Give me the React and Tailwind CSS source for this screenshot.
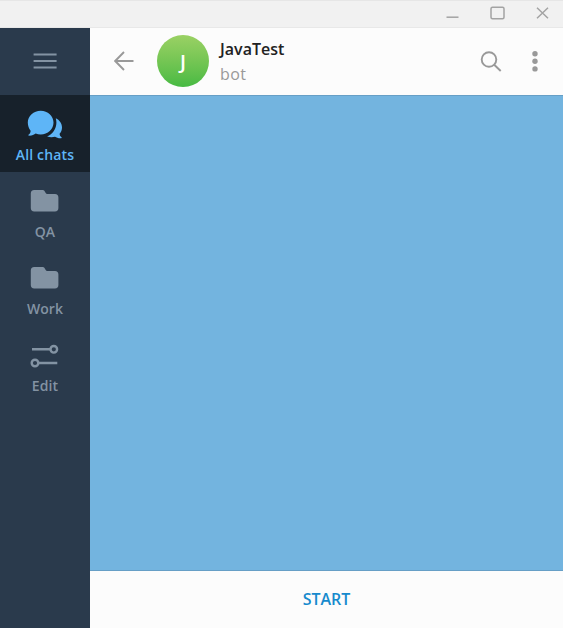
const ICON = 'block h-8 w-10 shrink-0';

function ChatsIcon() {
  return (
    <svg viewBox="0 0 40 32" className={ICON} fill="#5eb5f7">
      <path d="M15.7 2.8C22.8 2.8 28.5 8 28.5 14.6S22.8 26.5 15.7 26.5c-1.8 0-3.5-.3-5-.9-1.7 1.300-4.200 2.200-6.900 2-.6 0-.7-.6-.3-.9 1.400-1 2.200-2.500 2.100-4C3.900 20.600 2.800 17.800 2.800 14.600 2.800 8 8.600 2.800 15.700 2.800z" />
      <path d="M30.800 10.200c3.700 1.700 6.200 5.300 6.200 9.200 0 2.400-.9 4.700-2.400 6.400 0 1.500.7 2.700 1.900 3.500.5.400.3.900-.3.900-2.400.200-4.700-.5-6.200-1.500-2.600.700-5.600.600-7.900-.3 5.600-2.200 9.300-7.800 9.300-13.900 0-1.400-.2-2.900-.6-4.300z" />
    </svg>
  );
}

function FolderIcon() {
  return (
    <svg viewBox="0 0 40 32" className={ICON} fill="#8393a3">
      <path d="M9.200 4h8c1.100 0 1.800.300 2.300 1.100l1.200 2c.4.600.8.900 1.500.900H30c2.200 0 3.400 1.300 3.400 3.500v10.400c0 2.300-1.200 3.500-3.400 3.500H9.200c-2.200 0-3.400-1.200-3.400-3.500V7.500C5.800 5.300 7 4 9.200 4z" />
    </svg>
  );
}

function EditIcon() {
  return (
    <svg viewBox="0 0 40 32" className={ICON} fill="none" stroke="#8393a3" strokeWidth="2.400">
      <path d="M7 9.300h18M14 23h18.300" />
      <circle cx="28.800" cy="9.300" r="3.300" />
      <circle cx="10" cy="23" r="3.300" />
    </svg>
  );
}

const folders = [
  { label: 'All chats', Icon: ChatsIcon, active: true },
  { label: 'QA', Icon: FolderIcon },
  { label: 'Work', Icon: FolderIcon },
  { label: 'Edit', Icon: EditIcon },
];

function TitleBar() {
  return (
    <div className="flex h-7 shrink-0 justify-end border-t border-b border-t-[#e6e6e6] border-b-[#e8e8e8] bg-[#f1f1f1]">
      <svg viewBox="0 0 120 26" className="h-[26px] w-[120px]" fill="none" stroke="#a3a3a3" strokeWidth="1.500">
        <path d="M3.500 16.200h12" />
        <rect x="48" y="6.200" width="13" height="11.600" rx="1.500" />
        <path d="M94 6.800l11 10.400M105 6.800L94 17.200" />
      </svg>
    </div>
  );
}

function Sidebar() {
  return (
    <nav className="flex w-[90px] shrink-0 flex-col bg-[#2a3a4c]">
      <button className="flex h-[67px] items-center justify-center pb-px">
        <svg viewBox="0 0 24 16" className="h-4 w-6" stroke="#8393a3" strokeWidth="1.800">
          <path d="M.6 1.500h23M.6 8h23M.6 14.500h23" />
        </svg>
      </button>
      {folders.map(({ label, Icon, active }) => (
        <button
          key={label}
          className={
            active
              ? 'flex h-[77px] flex-col items-center bg-[#17212b] pt-[13px] text-[#5eb5f7]'
              : 'flex h-[77px] flex-col items-center pt-[14px] text-[#8393a3]'
          }
        >
          <Icon />
          <span
            className={
              active
                ? 'mt-[5px] text-sm leading-5 font-semibold tracking-[0.15px]'
                : 'mt-1 text-sm leading-5 font-semibold tracking-[0.1px]'
            }
          >
            {label}
          </span>
        </button>
      ))}
    </nav>
  );
}

function ChatHeader() {
  return (
    <header className="flex h-[67px] shrink-0 items-center bg-[#fcfcfc] pb-px">
      <svg viewBox="0 0 20 20" className="ml-6 h-5 w-5" fill="none" stroke="#999999" strokeWidth="1.900">
        <path d="M19.500 10H1.500M10 1L1.200 10l8.800 9" />
      </svg>
      <div className="ml-[23px] flex h-[52px] w-[52px] items-center justify-center rounded-full bg-linear-to-b from-[#9ad164] to-[#46ba43] pt-0.5 text-xl font-semibold text-white">
        J
      </div>
      <div className="ml-[11px] flex-1 pt-px">
        <div className="h-[25px] text-base leading-[25px] font-semibold text-[#222222]">JavaTest</div>
        <div className="h-[25px] text-base leading-[25px] tracking-[0.4px] text-[#999999]">bot</div>
      </div>
      <svg viewBox="0 0 22 22" className="h-[22px] w-[22px]" fill="none" stroke="#999999" strokeWidth="1.900">
        <circle cx="9" cy="9.500" r="7.300" />
        <path d="M14.200 14.700l6.500 6.300" />
      </svg>
      <svg viewBox="0 0 6 22" className="mr-[25px] ml-[30px] h-[22px] w-1.5" fill="#999999">
        <circle cx="3" cy="3.700" r="2.700" />
        <circle cx="3" cy="11.300" r="2.700" />
        <circle cx="3" cy="18.900" r="2.700" />
      </svg>
    </header>
  );
}

export default function App() {
  return (
    <div className="flex h-screen w-full flex-col overflow-hidden font-['Open_Sans','Noto_Sans',sans-serif]">
      <TitleBar />
      <div className="flex min-h-0 flex-1">
        <Sidebar />
        <div className="flex flex-1 flex-col">
          <ChatHeader />
          <main className="flex-1 border-t border-b border-t-[#669fc6] border-b-[#669fc6] bg-[#73b4df]" />
          <button className="flex h-[57px] shrink-0 items-center justify-center bg-[#fcfcfc] pb-0.5 text-base font-semibold text-[#168acd]">
            START
          </button>
        </div>
      </div>
    </div>
  );
}
